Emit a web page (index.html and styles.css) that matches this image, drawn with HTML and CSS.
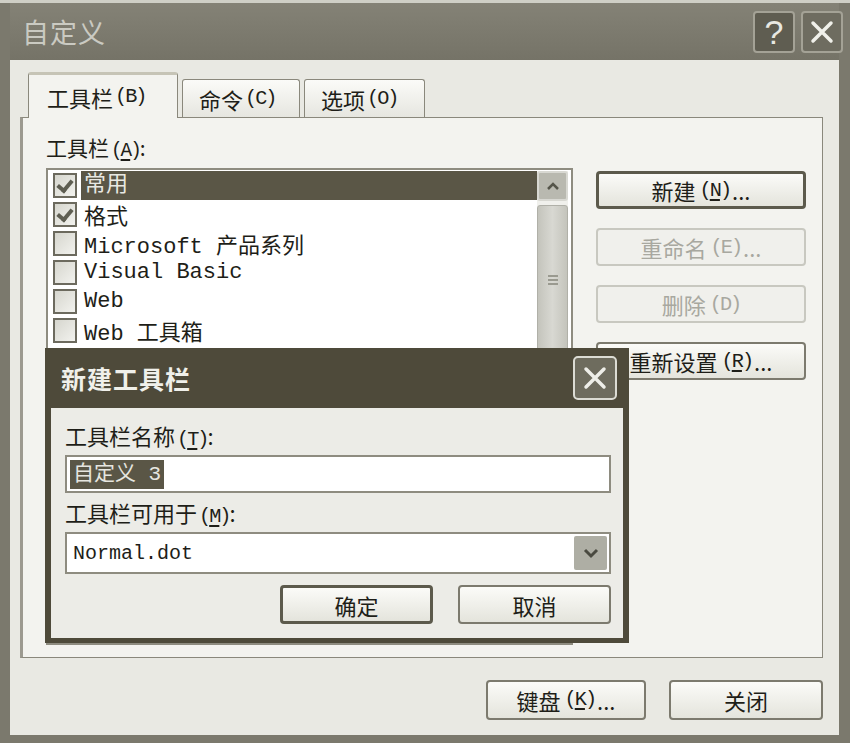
FILE: index.html
```html
<!DOCTYPE html>
<html lang="zh-CN">

<head>
    <meta charset="utf-8">
    <title>自定义</title>
    <link rel="stylesheet" href="styles.css">
</head>

<body>
    <div class="window">
        <div class="titlebar">
            <span class="title">自定义</span>
            <div class="caption-btns">
                <span class="cap-btn help">?</span>
                <span class="cap-btn close">
                    <svg width="26" height="26" viewBox="0 0 26 26"><path d="M4 4 L22 22 M22 4 L4 22" stroke="#f0f0ea" stroke-width="3.5" stroke-linecap="round"/></svg>
                </span>
            </div>
        </div>

        <div class="client">
            <div class="tabs">
                <span class="tab active">工具栏<span class="key">(B)</span></span>
                <span class="tab">命令<span class="key">(C)</span></span>
                <span class="tab">选项<span class="key">(O)</span></span>
            </div>

            <div class="panel">
                <div class="panel-left">
                    <div class="label">工具栏<span class="key">(<u>A</u>)</span>:</div>
                    <div class="listbox">
                        <ul class="items">
                            <li class="item selected"><span class="check on"></span><span class="text">常用</span></li>
                            <li class="item"><span class="check on"></span><span class="text">格式</span></li>
                            <li class="item"><span class="check"></span><span class="text">Microsoft 产品系列</span></li>
                            <li class="item"><span class="check"></span><span class="text">Visual Basic</span></li>
                            <li class="item"><span class="check"></span><span class="text">Web</span></li>
                            <li class="item"><span class="check"></span><span class="text">Web 工具箱</span></li>
                        </ul>
                        <div class="scrollbar">
                            <span class="arrow-btn">
                                <svg width="14" height="10" viewBox="0 0 14 10"><path d="M2 8 L7 3 L12 8" fill="none" stroke="#55554a" stroke-width="2.5"/></svg>
                            </span>
                            <span class="thumb"><span class="grip"></span></span>
                        </div>
                    </div>
                </div>

                <div class="panel-right">
                    <button class="btn default">新建<span class="key">(<u>N</u>)</span>...</button>
                    <button class="btn disabled">重命名<span class="key">(E)</span>...</button>
                    <button class="btn disabled">删除<span class="key">(D)</span></button>
                    <button class="btn">重新设置<span class="key">(<u>R</u>)</span>...</button>
                </div>
            </div>

            <div class="footer">
                <button class="btn keyboard">键盘<span class="key">(<u>K</u>)</span>...</button>
                <button class="btn close-btn">关闭</button>
            </div>
        </div>

        <div class="dialog">
            <div class="dlg-title">
                <span class="dlg-name">新建工具栏</span>
                <span class="dlg-close">
                    <svg width="26" height="26" viewBox="0 0 26 26"><path d="M4 4 L22 22 M22 4 L4 22" stroke="#eeeee8" stroke-width="3.5" stroke-linecap="round"/></svg>
                </span>
            </div>
            <div class="dlg-body">
                <div class="label">工具栏名称<span class="key">(<u>T</u>)</span>:</div>
                <div class="field"><span class="sel-text">自定义 3</span></div>
                <div class="label">工具栏可用于<span class="key">(<u>M</u>)</span>:</div>
                <div class="field combo">
                    <span class="mono">Normal.dot</span>
                    <span class="drop">
                        <svg width="16" height="12" viewBox="0 0 16 12"><path d="M2 3 L8 9 L14 3" fill="none" stroke="#4a4a40" stroke-width="3"/></svg>
                    </span>
                </div>
                <div class="dlg-actions">
                    <button class="btn ok">确定</button>
                    <button class="btn cancel">取消</button>
                </div>
            </div>
        </div>
    </div>
</body>

</html>
```

FILE: styles.css
```css
:root {
    --frame: #7b796d;
    --client: #e9e9e3;
    --panel: #f3f3ef;
    --dark: #4e4a3a;
    --select: #5a5646;
    --text: #1e1e18;
    --cjk: "Noto Sans CJK SC", "Liberation Sans", sans-serif;
    --mono: "Liberation Mono", "Noto Sans CJK SC", monospace;
}

* {
    box-sizing: border-box;
}

body {
    margin: 0;
    background: #f4f4f0;
    font-family: var(--cjk);
    color: var(--text);
}

.window {
    position: relative;
    width: 850px;
    height: 743px;
    background: var(--frame);
    border-top: 3px solid #cfcfc6;
    padding: 0 11px 8px 10px;
    display: flex;
    flex-direction: column;
}

.titlebar {
    height: 57px;
    display: flex;
    align-items: center;
    justify-content: space-between;
    background: linear-gradient(#848276, #757367);
}

.title {
    margin-left: 12px;
    font-size: 27px;
    color: #cacac2;
    letter-spacing: 1px;
}

.caption-btns {
    display: flex;
    gap: 6px;
    margin-right: -4px;
}

.cap-btn {
    width: 42px;
    height: 42px;
    display: flex;
    align-items: center;
    justify-content: center;
    border: 2px solid #a4a296;
    border-radius: 4px;
    background: #5f5d51;
    color: #e8e8e2;
    font-family: "Liberation Sans", sans-serif;
    font-size: 34px;
    line-height: 1;
}

.cap-btn.close {
    background: #6e6c60;
}

.client {
    flex: 1;
    background: var(--client);
    padding: 12px 16px 0 10px;
    display: flex;
    flex-direction: column;
}

.key {
    font-family: var(--mono);
    font-size: 0.92em;
    letter-spacing: -2px;
    margin-left: 2px;
}

u {
    text-decoration-thickness: 2px;
    text-underline-offset: 3px;
}

.tabs {
    display: flex;
    align-items: flex-end;
    gap: 4px;
    padding-left: 8px;
    height: 45px;
}

.tab {
    height: 38px;
    padding: 0 14px 0 16px;
    display: flex;
    align-items: center;
    font-size: 22px;
    background: linear-gradient(#fbfbf8, #e6e6e0);
    border: 1px solid #8a887c;
    border-bottom: none;
    border-radius: 3px 3px 0 0;
}

.tab.active {
    height: 46px;
    width: 150px;
    padding-left: 18px;
    background: var(--panel);
    border-top: 3px solid #c6c4b6;
    position: relative;
    z-index: 1;
    margin-bottom: -1px;
}

.tab:nth-child(2) {
    width: 118px;
}

.tab:nth-child(3) {
    width: 121px;
}

.panel {
    height: 541px;
    background: var(--panel);
    border: 1px solid #8a887c;
    border-left: 3px solid #9c9a90;
    padding: 14px 16px 12px 23px;
    display: flex;
    gap: 23px;
}

.panel-left {
    width: 527px;
    display: flex;
    flex-direction: column;
}

.label {
    font-size: 21px;
    height: 36px;
    line-height: 30px;
}

.listbox {
    flex: 1;
    display: flex;
    background: #ffffff;
    border: 2px solid #8e8c80;
    padding: 1px 3px 0 5px;
}

.items {
    flex: 1;
    list-style: none;
    margin: 0;
    padding: 0;
}

.item {
    height: 29px;
    display: flex;
    align-items: center;
    gap: 7px;
    font-family: var(--mono);
    font-size: 22px;
    white-space: pre;
}

.item.selected .text {
    background: var(--select);
    color: #e8e8e2;
    flex: 1;
    height: 29px;
    line-height: 29px;
    margin-left: -3px;
    padding-left: 3px;
}

.check {
    width: 24px;
    height: 25px;
    flex: none;
    border: 2px solid #6c6a5e;
    background: linear-gradient(135deg, #d6d6ce, #f2f2ee);
    position: relative;
}

.check.on::after {
    content: "";
    position: absolute;
    left: 5px;
    top: 2px;
    width: 6px;
    height: 11px;
    border: solid #5e5e52;
    border-width: 0 4px 4px 0;
    transform: rotate(40deg);
}

.scrollbar {
    width: 31px;
    display: flex;
    flex-direction: column;
    gap: 4px;
    background: #f0f0ec;
}

.arrow-btn {
    height: 30px;
    display: flex;
    align-items: center;
    justify-content: center;
    background: #b9b9b0;
    border: 2px solid #d8d8d2;
    border-radius: 3px;
}

.thumb {
    height: 190px;
    display: flex;
    align-items: center;
    justify-content: center;
    background: linear-gradient(90deg, #c4c4bc, #d8d8d2, #c4c4bc);
    border: 1px solid #b0b0a8;
    border-radius: 3px;
}

.grip {
    width: 10px;
    height: 10px;
    margin-top: -40px;
    border-top: 2px solid #9a9a90;
    border-bottom: 2px solid #9a9a90;
    position: relative;
}

.grip::after {
    content: "";
    position: absolute;
    left: 0;
    right: 0;
    top: 2px;
    border-top: 2px solid #9a9a90;
}

.panel-right {
    width: 210px;
    display: flex;
    flex-direction: column;
    gap: 19px;
    padding-top: 39px;
}

.btn {
    height: 38px;
    font-family: var(--cjk);
    font-size: 22px;
    color: var(--text);
    background: linear-gradient(#fbfbf8, #e4e4dc);
    border: 2px solid #7c7a6e;
    border-radius: 4px;
    padding: 0;
    display: flex;
    align-items: center;
    justify-content: center;
    gap: 2px;
}

.btn.default {
    border: 3px solid #5c5a4c;
}

.btn.disabled {
    color: #a8a8a0;
    border-color: #c8c8c0;
    background: #f0f0ec;
}

.footer {
    flex: 1;
    display: flex;
    justify-content: flex-end;
    align-items: center;
    gap: 23px;
    padding: 6px 0 0 0;
}

.keyboard {
    width: 160px;
    height: 40px;
}

.close-btn {
    width: 154px;
    height: 40px;
}

.dialog {
    position: absolute;
    left: 45px;
    top: 345px;
    width: 584px;
    height: 295px;
    background: var(--dark);
    padding: 0 6px 5px 6px;
    display: flex;
    flex-direction: column;
    z-index: 2;
}

.dlg-title {
    height: 60px;
    display: flex;
    align-items: center;
    justify-content: space-between;
    padding: 0 6px 0 10px;
}

.dlg-name {
    font-size: 25px;
    font-weight: bold;
    color: #f0f0ea;
    letter-spacing: 1px;
}

.dlg-close {
    width: 44px;
    height: 44px;
    display: flex;
    align-items: center;
    justify-content: center;
    background: #6e6c5e;
    border: 2px solid #dcdcd4;
    border-radius: 5px;
}

.dlg-body {
    flex: 1;
    background: #ecece7;
    padding: 8px 12px 0 14px;
    display: flex;
    flex-direction: column;
}

.dlg-body .label {
    font-size: 22px;
    height: 39px;
    line-height: 38px;
}

.field {
    height: 38px;
    background: #ffffff;
    border: 2px solid #8e8c80;
    display: flex;
    align-items: center;
    padding-left: 3px;
}

.sel-text {
    font-family: var(--mono);
    font-size: 21px;
    background: var(--select);
    color: #e6e6e0;
    padding: 0 3px;
    line-height: 29px;
    white-space: pre;
}

.combo {
    height: 42px;
    justify-content: space-between;
    padding: 2px 2px 2px 6px;
}

.mono {
    font-family: var(--mono);
    font-size: 20px;
}

.drop {
    width: 33px;
    height: 34px;
    display: flex;
    align-items: center;
    justify-content: center;
    background: #aeaea4;
    border-radius: 2px;
}

.dlg-actions {
    display: flex;
    justify-content: flex-end;
    gap: 25px;
    padding-top: 11px;
}

.ok,
.cancel {
    width: 153px;
    height: 39px;
}

.ok {
    border: 3px solid #5c5a4c;
}
```
